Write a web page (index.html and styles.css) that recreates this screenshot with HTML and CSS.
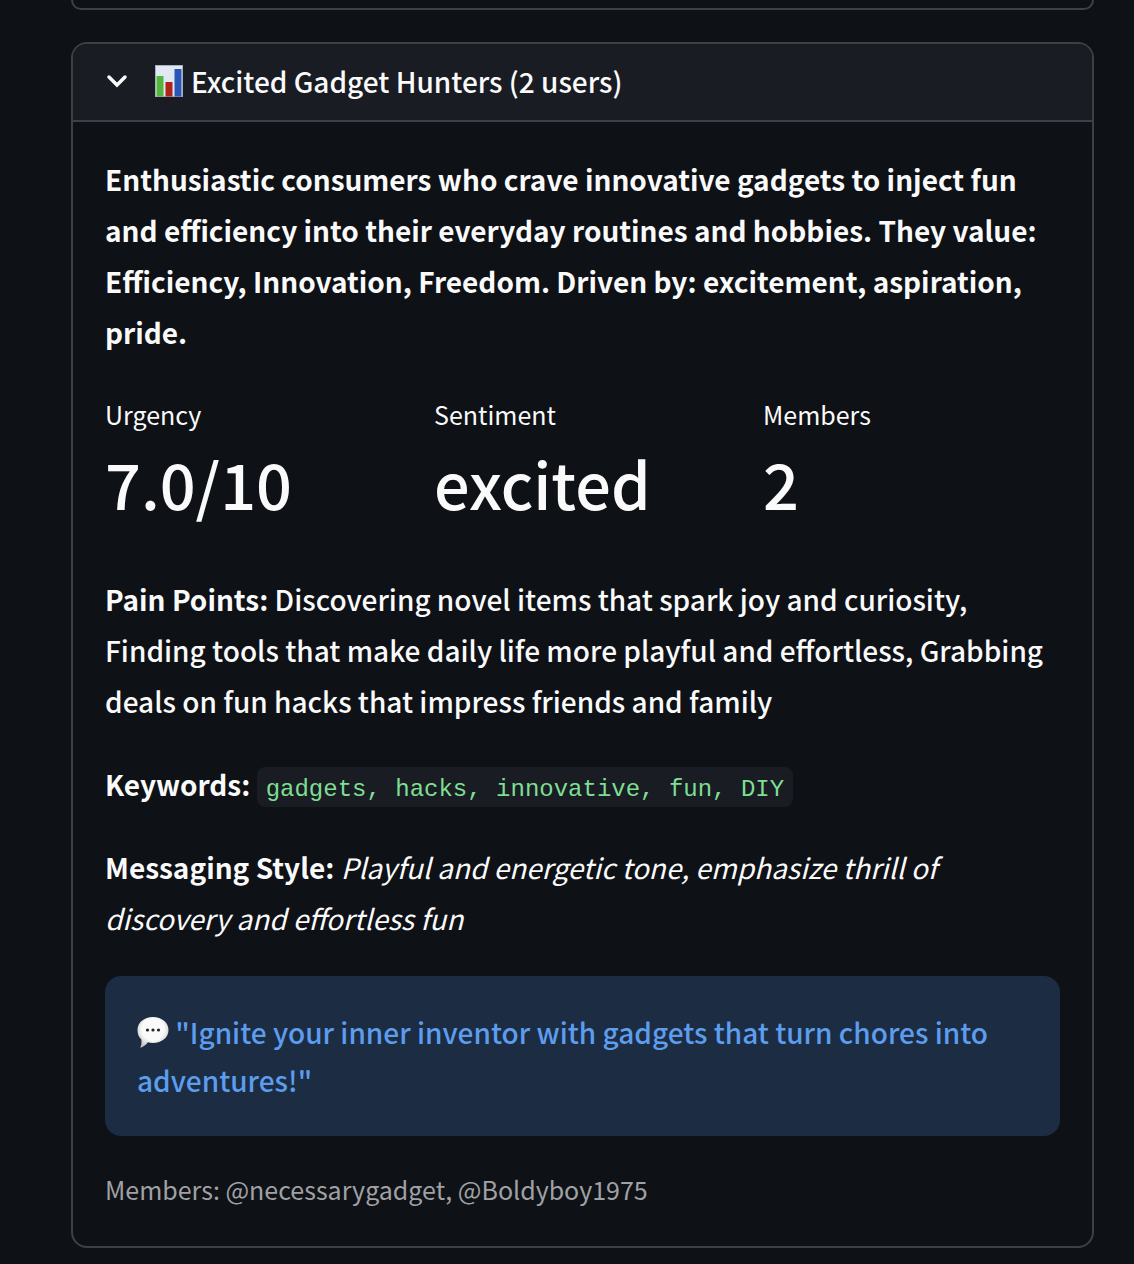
FILE: index.html
```html
<!DOCTYPE html>
<html lang="en">
<head>
<meta charset="utf-8">
<meta name="viewport" content="width=device-width, initial-scale=1">
<title>Excited Gadget Hunters</title>
<link rel="stylesheet" href="styles.css">
</head>
<body>
<main class="page">
  <div class="card card-previous"></div>
  <details class="card" open>
    <summary class="card-header">
      <svg class="chevron" viewBox="0 0 24 16" aria-hidden="true"><path d="M4 4l8 8 8-8" fill="none" stroke="#fafafa" stroke-width="3.500" stroke-linecap="round" stroke-linejoin="miter"/></svg>
      <svg class="chart" viewBox="0 0 28 32" aria-hidden="true">
        <rect width="28" height="32" fill="#a9b0bd"/>
        <rect x="1" y="1" width="26" height="30" fill="#e0e8f2"/>
        <rect x="1.500" y="11" width="7" height="20.500" fill="#53b53e"/>
        <rect x="10.500" y="17" width="7" height="14.500" fill="#b0221c"/>
        <rect x="19.500" y="4" width="7" height="27.500" fill="#2857b5"/>
      </svg>
      <span class="card-title">Excited Gadget Hunters (2 users)</span>
    </summary>
    <div class="card-body">
      <p class="text"><strong>Enthusiastic consumers who crave innovative gadgets to inject fun and efficiency into their everyday routines and hobbies. They value: Efficiency, Innovation, Freedom. Driven by: excitement, aspiration, pride.</strong></p>
      <dl class="metrics">
        <div class="metric"><dt class="metric-label">Urgency</dt><dd class="metric-value">7.0/10</dd></div>
        <div class="metric"><dt class="metric-label">Sentiment</dt><dd class="metric-value">excited</dd></div>
        <div class="metric"><dt class="metric-label">Members</dt><dd class="metric-value">2</dd></div>
      </dl>
      <p class="text"><strong>Pain Points:</strong> Discovering novel items that spark joy and curiosity, Finding tools that make daily life more playful and effortless, Grabbing deals on fun hacks that impress friends and family</p>
      <p class="text"><strong>Keywords:</strong> <code class="keywords">gadgets, hacks, innovative, fun, DIY</code></p>
      <p class="text"><strong>Messaging Style:</strong> <em class="style-note">Playful and energetic tone, emphasize thrill of discovery and effortless fun</em></p>
      <p class="quote"><svg class="bubble" viewBox="0 0 32 32" aria-hidden="true">
        <defs><radialGradient id="bubble-fill" cx="50%" cy="40%" r="60%"><stop offset="0.6" stop-color="#fafafa"/><stop offset="1" stop-color="#c4c4c4"/></radialGradient></defs>
        <path d="M16 1C24.800 1 31.500 6.500 31.500 14S24.800 27 16 27c-2 0-3.700-.2-5.200-.7C9 29 6 31.200 3.200 31.800c1.200-2.200 1.500-5 1.200-8.300C1.800 21.200.5 18 .5 14 .5 6.500 7.200 1 16 1z" fill="url(#bubble-fill)"/>
        <g fill="#222"><circle cx="10.500" cy="14" r="1.600"/><circle cx="16" cy="14" r="1.600"/><circle cx="21.500" cy="14" r="1.600"/></g>
      </svg> "Ignite your inner inventor with gadgets that turn chores into adventures!"</p>
      <p class="caption">Members: @necessarygadget, @Boldyboy1975</p>
    </div>
  </details>
</main>
</body>
</html>
```

FILE: styles.css
```css
* {
  box-sizing: border-box;
}

body {
  margin: 0;
  background: #0e1116;
  color: #fafafa;
  font-family: "Noto Sans CJK SC", "Noto Sans", sans-serif;
  font-size: 28px;
  font-weight: 500;
  line-height: 51px;
}

.page {
  display: flex;
  flex-direction: column;
  gap: 32px;
  padding: 0 40px 16px 71px;
}

.card {
  border: 2px solid #3e4045;
  border-radius: 16px;
  overflow: hidden;
}

.card-previous {
  height: 10px;
  border-top: 0;
  border-radius: 0 0 16px 16px;
}

.card-header {
  display: flex;
  align-items: center;
  padding: 11px 32px 13px;
  background: #1a1c24;
  line-height: 52px;
  list-style: none;
  cursor: pointer;
}

.card[open] .card-header {
  border-bottom: 2px solid #3e4045;
}

.chevron {
  width: 24px;
  height: 16px;
  margin-right: 26px;
}

.chart {
  width: 28px;
  height: 32px;
  margin-right: 8px;
}

.card-body {
  display: flex;
  flex-direction: column;
  gap: 32px;
  padding: 32px 32px 36px;
}

.text,
.quote,
.caption,
.metrics,
.metric-value {
  margin: 0;
}

.metrics {
  display: grid;
  grid-template-columns: repeat(3, 1fr);
  gap: 32px;
  padding-bottom: 14px;
}

.metric-label {
  font-size: 25px;
  font-weight: 400;
  line-height: 48px;
}

.metric-value {
  font-size: 63px;
  line-height: 90px;
}

.keywords {
  padding: 9px 9px 4px;
  border-radius: 8px;
  background: #1a1c24;
  color: #7ddf92;
  font-family: "Liberation Mono", monospace;
  font-size: 24px;
  font-weight: 400;
  line-height: 24px;
}

.style-note {
  font-weight: 400;
}

.quote {
  padding: 32px;
  border-radius: 16px;
  background: #1c2c42;
  color: #5c9ded;
  line-height: 48px;
}

.bubble {
  width: 32px;
  height: 32px;
  vertical-align: -4px;
}

.caption {
  color: #a0a1a4;
  font-size: 25px;
  font-weight: 400;
  line-height: 42px;
}
```
